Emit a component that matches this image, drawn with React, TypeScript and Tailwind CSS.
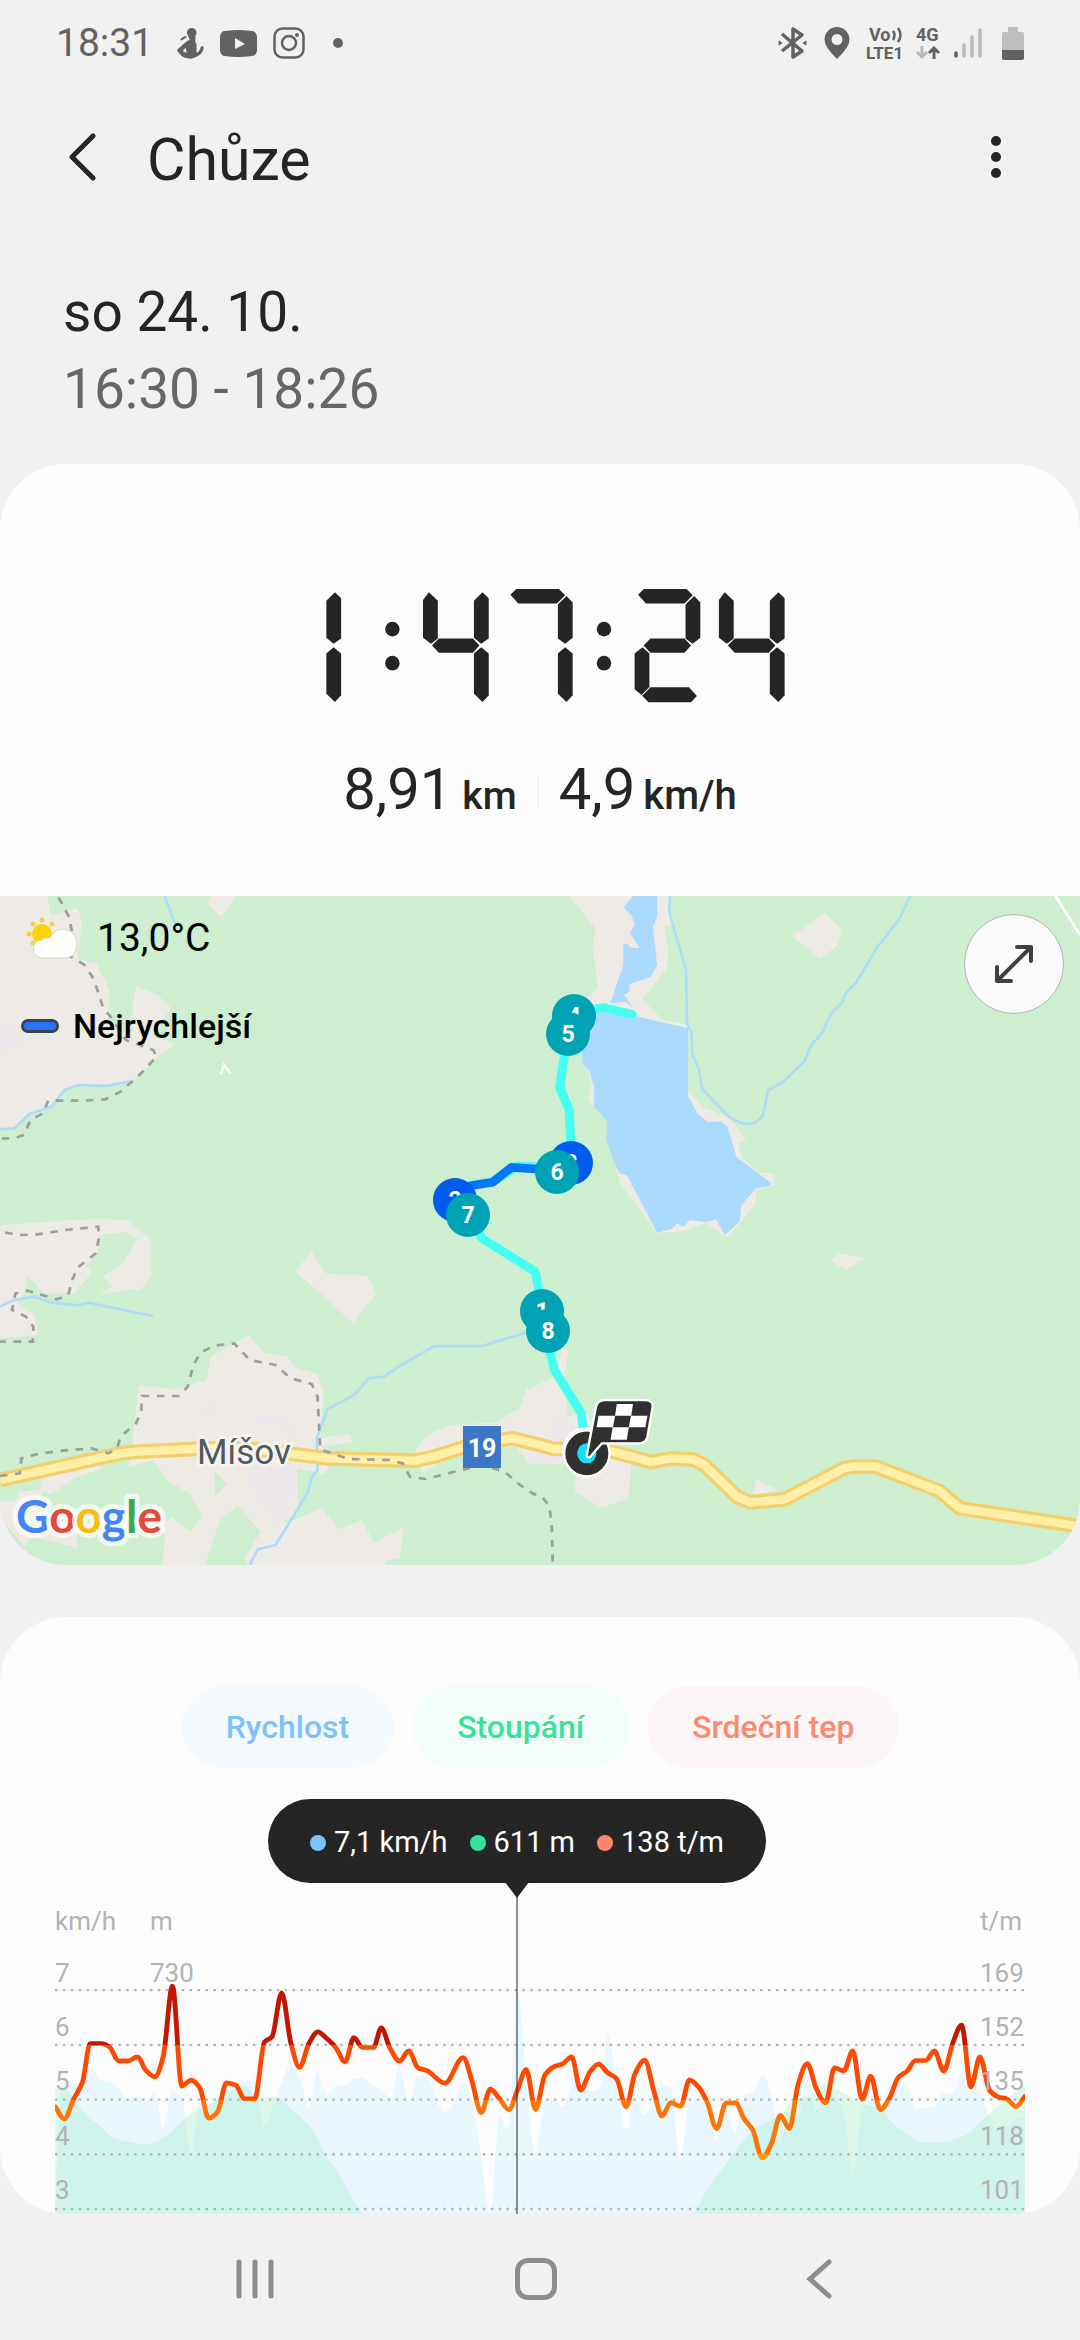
type Point = [number, number];

const SEGMENTS: Record<string, string> = {
  a: '10,104 27,87 151,87 169,106 145,130 33,130',
  b: '148,133 173,108 191,127 191,233 169,251 148,235',
  B: '148,122 173,97 191,115 191,235 169,251 148,233',
  c: '148,280 169,261 191,280 191,405 173,425 148,400',
  d: '22,406 46,381 158,381 181,407 164,426 40,426',
  e: '0,280 23,261 43,280 43,380 20,404 0,387',
  f: '0,120 17,97 43,122 43,235 23,251 0,233',
  g: '26,256 46,235 145,235 164,256 145,278 46,278',
};

const DIGITS = [
  { x: -14, on: 'Bc' },
  { x: 415, on: 'fBgc' },
  { x: 659, on: 'abc' },
  { x: 1030, on: 'abged' },
  { x: 1275, on: 'fBgc' },
];

const PINS = [
  { n: 1, x: 542, y: 415, fast: false },
  { n: 2, x: 455, y: 304, fast: true },
  { n: 3, x: 571, y: 267, fast: true },
  { n: 4, x: 574, y: 120, fast: false },
  { n: 5, x: 568, y: 138, fast: false },
  { n: 6, x: 557, y: 276, fast: false },
  { n: 7, x: 468, y: 319, fast: false },
  { n: 8, x: 548, y: 435, fast: false },
];

const HEART_RATE: Point[] = [
  [161, 680], [187, 716], [215, 655], [240, 605], [262, 490], [295, 490], [318, 500], [345, 542], [372, 542], [399, 530],
  [425, 572], [450, 590], [474, 530], [501, 318], [528, 618], [555, 600], [580, 622], [606, 714], [632, 695], [658, 608],
  [685, 615], [710, 656], [740, 656], [768, 486], [790, 470], [818, 338], [845, 490], [870, 562], [897, 490], [923, 455],
  [950, 476], [975, 502], [1002, 545], [1028, 472], [1052, 502], [1085, 502], [1107, 443], [1133, 505], [1160, 543],
  [1187, 512], [1214, 563], [1240, 571], [1292, 609], [1345, 532], [1370, 600], [1397, 697], [1424, 627], [1450, 655],
  [1478, 688], [1503, 628], [1528, 568], [1555, 688], [1582, 585], [1608, 560], [1634, 551], [1660, 530], [1686, 630],
  [1713, 575], [1738, 552], [1765, 578], [1790, 595], [1818, 680], [1844, 580], [1872, 540], [1898, 630], [1922, 708],
  [1948, 667], [1976, 678], [2002, 599], [2028, 620], [2053, 665], [2081, 745], [2108, 668], [2136, 668], [2160, 715],
  [2186, 750], [2213, 833], [2240, 790], [2266, 705], [2292, 745], [2318, 610], [2344, 550], [2370, 625], [2397, 668],
  [2423, 563], [2450, 572], [2476, 512], [2503, 658], [2528, 588], [2556, 688], [2582, 655], [2608, 592], [2634, 572],
  [2658, 541], [2688, 541], [2713, 512], [2740, 573], [2766, 490], [2792, 435], [2819, 620], [2845, 530], [2873, 630],
  [2898, 650], [2923, 656], [2950, 679], [2976, 648],
];

const SPEED: Point[] = [
  [161, 1001], [180, 600], [210, 612], [240, 600], [265, 560], [290, 598], [318, 602], [345, 625], [370, 660], [397, 643],
  [424, 668], [450, 635], [475, 745], [500, 630], [528, 650], [555, 822], [580, 665], [606, 670], [632, 658], [658, 640],
  [685, 620], [710, 605], [740, 603], [766, 735], [800, 660], [820, 600], [845, 552], [870, 590], [897, 683], [922, 573],
  [950, 645], [975, 618], [1002, 616], [1028, 594], [1052, 595], [1080, 615], [1107, 630], [1135, 655], [1160, 550],
  [1187, 668], [1214, 590], [1240, 590], [1265, 660], [1292, 695], [1318, 670], [1345, 608], [1370, 660], [1397, 830],
  [1424, 1001], [1450, 710], [1476, 748], [1503, 330], [1528, 600], [1555, 820], [1582, 660], [1608, 650], [1634, 680],
  [1660, 615], [1686, 590], [1700, 632], [1730, 632], [1748, 600], [1765, 463], [1790, 610], [1818, 750], [1844, 655],
  [1872, 705], [1895, 660], [1920, 612], [1948, 625], [1976, 845], [2002, 670], [2028, 658], [2055, 690], [2081, 775],
  [2108, 680], [2134, 760], [2160, 645], [2186, 635], [2213, 586], [2240, 640], [2266, 790], [2290, 690], [2318, 720],
  [2344, 565], [2370, 698], [2397, 640], [2423, 650], [2450, 700], [2476, 892], [2503, 690], [2528, 660], [2556, 675],
  [2582, 620], [2608, 600], [2634, 620], [2660, 685], [2700, 680], [2715, 680], [2735, 640], [2766, 638], [2792, 580],
  [2819, 630], [2840, 620], [2865, 690], [2890, 745], [2920, 740], [2950, 718], [2976, 708],
];

const ELEVATION: Point[] = [
  [161, 625], [190, 628], [230, 680], [265, 718], [290, 735], [325, 770], [350, 780], [380, 785], [410, 792], [440, 788],
  [480, 770], [500, 752], [530, 722], [560, 695], [600, 678], [640, 655], [680, 625], [710, 615], [745, 650], [800, 650],
  [850, 690], [895, 735], [920, 770], [950, 830], [975, 865], [1025, 955], [1057, 1001], [2006, 1001], [2058, 920],
  [2108, 850], [2133, 815], [2193, 745], [2258, 708], [2323, 652], [2358, 650], [2393, 610], [2438, 632], [2498, 665],
  [2558, 690], [2598, 735], [2638, 765], [2678, 785], [2728, 786], [2792, 770], [2868, 705], [2938, 645], [2976, 618],
];

const GRID_ROWS = [330, 494, 658, 822, 986];

const AXIS = [
  { y: 214, speed: '7', rate: '169' },
  { y: 268, speed: '6', rate: '152' },
  { y: 322, speed: '5', rate: '135' },
  { y: 377, speed: '4', rate: '118' },
  { y: 431, speed: '3', rate: '101' },
];

const ROAD =
  'M0 1770L350 1690 400 1685 600 1675H720L950 1705 1205 1712 1260 1700 1380 1660 1450 1650 1490 1645 1568 1665 1608 1677 1700 1675 1780 1685 1890 1716 1948 1705 2015 1709 2045 1725 2140 1820 2178 1837 2278 1828 2450 1735 2475 1730H2543L2728 1803 2788 1855 3110 1905 3136 1910';

// Monotone cubic through the samples, so that peaks stay on the samples
function smooth(points: Point[]) {
  const slope = points.slice(1).map(([x, y], i) => (y - points[i][1]) / (x - points[i][0]));
  const tangent = points.map((_, i) => {
    const before = slope[i - 1];
    const after = slope[i];
    if (before === undefined || after === undefined) return before ?? after;
    return before * after <= 0 ? 0 : (2 * before * after) / (before + after);
  });
  return points.reduce((d, [x, y], i) => {
    if (i === 0) return `M${x} ${y}`;
    const [px, py] = points[i - 1];
    const h = (x - px) / 3;
    return `${d}C${px + h} ${py + h * tangent[i - 1]} ${x - h} ${y - h * tangent[i]} ${x} ${y}`;
  }, '');
}

const area = (points: Point[]) => `${smooth(points)}V1001H${points[0][0]}Z`;

const StatusBar = () => (
  <div className="flex h-[82px] items-center justify-between px-14 pt-1 text-[#626262]">
    <div className="flex items-center">
      <span className="text-[39px] leading-none">18:31</span>
      <svg className="ml-6 h-[31px] w-[27px]" viewBox="0 0 77 90" fill="currentColor">
        <circle cx="42" cy="14" r="14" />
        <path d="M33 24h20l-1 16q6 6 4 14v18q10-4 12-16 2-5 7-2 3 2 1 8-6 22-36 27-24-1-31-12L1 68q-3-3 1-7l24-21 10-6z" />
        <path d="M8 34q8-11 20-11-4 9-18 13z" />
        <path d="M16 66l8-9 4 14q-8 1-12-5z" fill="#f1f1f1" />
      </svg>
      <svg className="ml-4 h-[27px] w-[37px]" viewBox="0 0 37 27">
        <path d="M5 1Q18-1 32 1q4 0 5 5 1 8 0 15-1 5-5 5-14 2-27 0-4 0-5-5-1-7 0-15 1-5 5-5z" fill="currentColor" />
        <path d="M15 8l10 6-10 5z" fill="#f1f1f1" />
      </svg>
      <svg className="ml-4 h-8 w-8" viewBox="0 0 32 32" fill="none" stroke="currentColor" strokeWidth="2.5">
        <rect x="1.5" y="1.5" width="29" height="29" rx="8" />
        <circle cx="16" cy="16" r="7" />
        <circle cx="24" cy="8" r="2" fill="currentColor" stroke="none" />
      </svg>
      <span className="ml-7 h-2.5 w-2.5 rounded-full bg-current" />
    </div>
    <div className="flex items-center">
      <svg className="h-[34px] w-[30px]" viewBox="0 0 30 34" fill="none" stroke="currentColor" strokeWidth="3.5" strokeLinejoin="round">
        <path d="M4 8l20 17-9 6V3l9 6L4 25" />
        <path d="M1 15l3 2-3 2zM28 15l-3 2 3 2z" fill="currentColor" strokeWidth="1" />
      </svg>
      <svg className="ml-4 h-8 w-[26px]" viewBox="0 0 26 32">
        <path d="M13 0a12.500 12.500 0 0 1 12.500 12.500Q25.500 20 13 32 .5 20 .5 12.500A12.500 12.500 0 0 1 13 0zm0 7a5.500 5.500 0 1 0 0 11 5.500 5.500 0 0 0 0-11z" fill="currentColor" />
      </svg>
      <svg className="ml-4 h-11 w-[40px]" viewBox="0 0 40 44" fill="currentColor">
        <text x="3" y="20" className="text-[18px] font-bold">Vo</text>
        <path d="M27 10q3 4 0 9M32 7q5 7 0 14" fill="none" stroke="currentColor" strokeWidth="2.500" />
        <text x="0" y="38" className="text-[17px] font-bold">LTE1</text>
      </svg>
      <svg className="ml-2.5 h-11 w-6" viewBox="0 0 24 44" fill="currentColor">
        <text x="0" y="20" className="text-[18px] font-bold">4G</text>
        <path d="M6 25v11M1 31l5 5 5-5" fill="none" stroke="#b9b9b9" strokeWidth="3" />
        <path d="M18 38V27M13 32l5-5 5 5" fill="none" stroke="currentColor" strokeWidth="3" />
      </svg>
      <svg className="ml-3.5 h-[30px] w-7" viewBox="0 0 28 30" fill="none" strokeWidth="3.500" strokeLinecap="round">
        <path d="M2 25v3" stroke="currentColor" />
        <path d="M10 17v11M18 9v19M26 2v26" stroke="#b9b9b9" />
      </svg>
      <svg className="ml-5 h-[33px] w-[22px]" viewBox="0 0 22 33">
        <path d="M6 0h10v5h4q2 0 2 2v24q0 2-2 2H2q-2 0-2-2V7q0-2 2-2h4z" fill="#bfbfbf" />
        <path d="M0 23h22v8q0 2-2 2H2q-2 0-2-2z" fill="currentColor" />
      </svg>
    </div>
  </div>
);

const Header = () => (
  <header>
    <div className="flex h-[150px] items-center px-14">
      <button type="button" aria-label="Zpět" className="flex h-16 w-[91px] items-center pl-3">
        <svg className="h-12 w-7" viewBox="0 0 28 48" fill="none" stroke="#252525" strokeWidth="5" strokeLinecap="round" strokeLinejoin="round">
          <path d="M25 3L4 24l21 21" />
        </svg>
      </button>
      <h1 className="pt-1 text-[59px] leading-none">Chůze</h1>
      <button type="button" aria-label="Další možnosti" className="ml-auto flex h-16 w-16 items-center justify-center">
        <svg className="ml-2 h-[42px] w-2.5" viewBox="0 0 10 42" fill="#252525">
          <circle cx="5" cy="5" r="5" />
          <circle cx="5" cy="21" r="5" />
          <circle cx="5" cy="37" r="5" />
        </svg>
      </button>
    </div>
    <div className="px-[63px] pb-9 pt-[42px] text-[55px] leading-[77px]">
      <p>so 24. 10.</p>
      <p className="text-[#666666]">16:30 - 18:26</p>
    </div>
  </header>
);

const Duration = () => (
  <svg role="img" aria-label="1:47:24" className="mx-auto h-[115px] w-[492px]" viewBox="40 84 1430 344" preserveAspectRatio="none" fill="#252525">
    {DIGITS.map(({ x, on }) => (
      <g key={x} transform={`translate(${x} 0)`}>
        {on.split('').map((s) => (
          <polygon key={s} points={SEGMENTS[s]} />
        ))}
      </g>
    ))}
    {[326, 941].map((x) => (
      <g key={x}>
        <ellipse cx={x} cy="207" rx="21" ry="22" />
        <ellipse cx={x} cy="309" rx="21" ry="22" />
      </g>
    ))}
  </svg>
);

const Terrain = () => (
  <svg width="1080" height="669" viewBox="0 18 3136 2007" preserveAspectRatio="none" fill="none">
    <rect y="18" width="3136" height="2007" fill="#cdeecf" />
    <g fill="#eeebe6">
      <path d="M0 18H138L148 75 225 55 238 95 225 208 278 218 318 300V385L350 425H385V350L395 287 455 312 497 355 440 440 515 460 465 495 382 575 310 590 225 583 190 600 150 650 85 675 42 715 0 718Z" />
      <path d="M610 18H685L643 80 602 42Z" />
      <path d="M0 1005L300 985 370 992 440 1050V1160L403 1205 385 1195 285 1215 328 1190 298 1160 360 1115 398 1047 370 1025 288 1035 285 1090 250 1125 267 1148 215 1210H125L82 1158 70 1210 45 1235 0 1250Z" />
      <path d="M0 1250L40 1230 100 1275 112 1335 0 1345Z" />
      <path d="M905 1085L945 1150 1068 1158 1092 1212 1025 1298 857 1143Z" />
      <path d="M403 1485L510 1498 600 1470 612 1400 722 1335 765 1388 832 1398 860 1433 922 1452 940 1510 930 1645 1015 1632 1025 1655 935 1670 955 1730 940 1753 862 1735 865 1870 810 1900 840 1895 935 1855 985 1918 1050 1890 1085 1957 1172 1915 1160 2005 1120 2012V2025H720L710 2005 757 1925 690 1848 640 1885 595 2025H470L480 1955 470 1900 500 1883 553 1925 587 1875 550 1810 490 1775 445 1710 372 1733 385 1660Z" />
      <path d="M118 1765L295 1725 290 1738 215 1765 180 1790 145 1815 130 1800 100 1850 225 1890V1973L95 1940 68 1968 0 1880V1832H45L55 1805 118 1798Z" />
      <path d="M1205 1685L1240 1635 1310 1605 1440 1597 1456 1588 1508 1555 1528 1500 1613 1460 1635 1360 1650 1390 1640 1450 1648 1580 1700 1565 1735 1620 1830 1690 1833 1725 1826 1825 1748 1853 1670 1808 1672 1722H1535L1500 1670 1345 1680 1225 1748Z" />
      <path d="M2433 1090L2513 1105 2458 1138 2413 1115Z" />
      <path d="M2196 1767L2258 1800 2186 1815Z" />
      <path d="M2395 68L2443 120 2433 165 2381 208 2301 138Z" />
      <path d="M1653 18L1728 115 1720 180 1738 290 1705 325 1740 360 1840 375 1998 415 1990 402 1925 390 1865 328 1933 240 1942 195 1928 108H1947L1940 18Z" />
      <path d="M1690 480L1718 590 1708 630 1770 700 1785 820 1800 880 1908 1030 1985 1024 2050 1000 2108 1042 2150 1000 2195 940V900L2247 887 2245 850 2205 848 2155 805 2142 765 2166 748 2120 685 2040 650 1998 600Z" />
    </g>
    <path d="M622 1742L658 1782 625 1817Z" fill="#cdeecf" />
    <g fill="#ede8ec">
      <path d="M0 400L75 430V470L0 485Z" />
      <path d="M580 1565L630 1533 628 1565 590 1575Z" />
      <path d="M733 1600L770 1570 820 1580 870 1620 865 1645 800 1605Z" />
      <path d="M720 1750L855 1720 860 1775 820 1900H795L745 1810Z" />
      <path d="M1610 1560L1648 1590 1660 1722H1535L1530 1680 1620 1640Z" />
    </g>
    <g fill="#abdaff">
      <path d="M1838 18L1810 52 1835 78 1843 105 1828 128 1858 173H1832L1820 160 1810 165V225L1772 340 1818 335 1842 358 1812 315 1828 303V283L1890 260 1908 225 1896 110 1908 80V18Z" />
      <path d="M1733 365L1843 378 1998 415V618L2025 670 2055 695H2095L2113 710 2138 800 2240 880 2238 887 2195 895 2153 945 2148 995 2105 1035 2078 988 2050 997 2003 990 1985 1010 1965 1000 1955 1015 1908 1028 1820 855 1798 850 1785 820 1760 750 1764 695 1725 650V590L1710 540 1692 520 1690 490Z" />
    </g>
    <g stroke="#aedcf8" strokeWidth="8" strokeLinejoin="round">
      <path d="M478 18L510 105" />
      <path d="M0 718L42 715 85 672 150 650 187 600 228 585 310 588 382 573" />
      <path d="M0 1250L40 1230 98 1220 145 1237 225 1246 255 1238 445 1278" />
      <path d="M1530 1327L1400 1368H1262L1165 1425 1115 1460 1070 1465 1028 1515 950 1558 920 1645 922 1740 905 1762 893 1810 800 1965 748 1978 725 2025" />
      <path d="M1946 18L1943 65 1992 240 1995 400 2008 430 2010 490 2030 540 2038 595 2118 682 2160 702 2190 700 2215 678 2230 602 2275 575 2337 513 2353 470 2390 425 2410 375 2447 335 2455 310 2488 275 2545 175 2610 90 2643 18" />
    </g>
    <path d="M3065 18L3136 135M641 553L650 525 669 549" stroke="#fff" strokeWidth="8" />
    <g strokeLinejoin="round">
      <path d={ROAD} stroke="#f4d06c" strokeWidth="44" />
      <path d={ROAD} stroke="#ffefa9" strokeWidth="25" />
    </g>
    <g stroke="#9e9e9e" strokeWidth="8" strokeDasharray="22 22">
      <path d="M170 22L200 80 210 130 198 195 245 225 268 260 283 300 300 355 325 385 365 450 445 480 455 500 400 560 350 605 305 628 240 632H140L125 670 88 690 70 735 45 744 0 746" />
      <path d="M15 1028L60 1035 110 1033 190 1020 285 1010 288 1040 278 1090 225 1133 210 1170 198 1215 165 1228 80 1202 45 1210 35 1260 75 1280 97 1310 95 1355H0" />
      <path d="M0 1758L58 1750 62 1705 110 1692 180 1682 265 1675 315 1690 340 1675 350 1640 395 1600 410 1565 412 1518H520L545 1490 560 1430 580 1390 620 1367 680 1360 725 1410 800 1425 845 1465 905 1482 922 1520 930 1680 960 1688 1010 1707 1130 1710 1170 1720 1190 1760 1235 1767 1400 1725 1465 1745 1510 1785 1550 1812 1575 1820 1595 1850 1602 1900 1605 2025" />
    </g>
    <g strokeWidth="26" strokeLinecap="round" strokeLinejoin="round">
      <path d="M1836 373L1756 353 1735 355 1665 400 1640 490 1625 592 1653 660 1657 755 1660 800 1600 832 1505 828 1430 875 1365 887 1360 975 1400 1045 1554 1145 1575 1250 1600 1400 1610 1440 1688 1570 1702 1690" stroke="#46fff3" />
      <path d="M1600 840L1485 832 1430 877 1365 887 1320 915" stroke="#0078fb" />
    </g>
  </svg>
);

const FinishFlag = () => (
  <svg width="1080" height="669" viewBox="0 18 3136 2007" preserveAspectRatio="none" stroke="#fff" strokeWidth="7" strokeLinejoin="round">
    <ellipse cx="1702" cy="1683" rx="66" ry="68" fill="#8a8a8a" />
    <ellipse cx="1704" cy="1690" rx="66" ry="69" fill="#303030" />
    <ellipse cx="1704" cy="1690" rx="28" ry="30" fill="#16e0f8" stroke="none" />
    <path d="M1755 1530H1875Q1898 1532 1895 1552L1880 1640Q1876 1660 1855 1660H1748L1714 1700Q1704 1706 1704 1695L1730 1552Q1735 1530 1755 1530Z" fill="#303030" />
    <g fill="#fff" stroke="none">
      <path d="M1791 1542H1838L1833 1577H1786Z" />
      <path d="M1738 1577H1786L1780 1612H1732Z" />
      <path d="M1832 1577H1880L1874 1612H1826Z" />
      <path d="M1779 1612H1826L1820 1649H1773Z" />
    </g>
  </svg>
);

const RouteMap = () => (
  <div className="relative">
    <svg className="block w-full font-[Roboto,sans-serif]" viewBox="0 0 1080 669">
      <Terrain />
      <text x="197" y="568" className="text-[35px]" fill="#525860" stroke="#f6f3ef" strokeWidth="6" strokeLinejoin="round" paintOrder="stroke">Míšov</text>
      <rect x="463" y="530" width="38" height="42" fill="#3a77c6" />
      <text x="482" y="561" textAnchor="middle" className="text-[25px] font-bold" fill="#fff">19</text>
      {PINS.map(({ n, x, y, fast }) => (
        <g key={n}>
          <circle cx={x} cy={y} r="22" fill={fast ? '#005cee' : '#00a3b4'} />
          <text x={x} y={y + 8} textAnchor="middle" className="text-[23px] font-bold" fill="#fff">{n}</text>
        </g>
      ))}
      <FinishFlag />
      <text x="16" y="637" className="font-[Lato,sans-serif] text-[46px] font-bold" stroke="#ffffffb0" strokeWidth="10" strokeLinejoin="round" paintOrder="stroke">
        <tspan fill="#4285f4">G</tspan>
        <tspan fill="#e34a3b">o</tspan>
        <tspan fill="#f6bc14">o</tspan>
        <tspan fill="#4285f4">g</tspan>
        <tspan fill="#3aa757">l</tspan>
        <tspan fill="#e34a3b">e</tspan>
      </text>
    </svg>
    <div className="absolute left-[21px] top-4 text-black">
      <div className="flex items-center">
        <svg className="ml-1 h-[44px] w-[54px]" viewBox="0 0 54 44">
          <g fill="#f1d04f">
            <circle cx="4" cy="18" r="2.500" />
            <circle cx="8" cy="8" r="2.500" />
            <circle cx="17" cy="4" r="2.500" />
            <circle cx="27" cy="8" r="2.500" />
            <circle cx="8" cy="27" r="2.500" />
          </g>
          <circle cx="17" cy="18" r="10" fill="#fbd305" />
          <path d="M17 42a8 8 0 0 1 0-18 9 9 0 0 1 8-2 14 14 0 0 1 27 5q0 11-9 15z" fill="#fdfdfc" stroke="#d8d5cf" strokeWidth="1" />
        </svg>
        <span className="ml-[18px] text-[39px] leading-[52px]">13,0°C</span>
      </div>
      <div className="mt-9 flex items-center">
        <span className="h-3.5 w-[38px] rounded-full border-3 border-[#3c4452] bg-[#2a72fa]" />
        <span className="ml-3.5 text-[34px] font-medium leading-[52px]">Nejrychlejší</span>
      </div>
    </div>
    <button type="button" aria-label="Zvětšit mapu" className="absolute right-4 top-[18px] flex h-[100px] w-[100px] items-center justify-center rounded-full border border-[#b3b3b3] bg-[#fafafa]">
      <svg className="h-10 w-10" viewBox="0 0 40 40" fill="none" stroke="#404040" strokeWidth="4" strokeLinecap="round" strokeLinejoin="round">
        <path d="M3 37L37 3M23 3h14v14M3 23v14h14" />
      </svg>
    </button>
  </div>
);

const Summary = () => (
  <section className="overflow-hidden rounded-[66px] bg-[#fcfcfc]">
    <div className="pb-16 pt-[124px]">
      <Duration />
      <div className="mt-[49px] flex h-20 items-center justify-center text-[58px] leading-[80px]">
        <p>
          8,91<span className="ml-2.5 text-[39px] font-medium">km</span>
        </p>
        <span className="mx-5 h-[34px] w-0.5 bg-[#f4f4f4]" />
        <p>
          4,9<span className="ml-2 text-[40px] font-medium">km/h</span>
        </p>
      </div>
    </div>
    <RouteMap />
  </section>
);

const Chart = () => (
  <div className="relative mx-[55px]">
    <svg className="block w-full" viewBox="0 0 970 446">
      <defs>
        <linearGradient id="zones" gradientUnits="userSpaceOnUse" x1="0" y1="0" x2="0" y2="1000">
          <stop offset=".495" stopColor="#c31603" />
          <stop offset=".495" stopColor="#fd4a02" />
          <stop offset=".658" stopColor="#fd4a02" />
          <stop offset=".658" stopColor="#fd7509" />
          <stop offset=".822" stopColor="#fd7509" />
          <stop offset=".822" stopColor="#ff9b05" />
        </linearGradient>
      </defs>
      <svg y="112" width="970" height="334" viewBox="160 0 2816 1001" preserveAspectRatio="none" fill="none">
        <path d={area(SPEED)} fill="#e9f6fe" />
        <path d={area(ELEVATION)} fill="#98efc4" fillOpacity=".32" />
        <path d={GRID_ROWS.map((y) => `M160 ${y}H2976`).join('')} stroke="#b0b4b4" strokeWidth="7" strokeDasharray="7 16" />
        <path d={smooth(HEART_RATE)} stroke="url(#zones)" strokeWidth="14" strokeLinecap="round" strokeLinejoin="round" />
      </svg>
      <path d="M462 115V446" stroke="#252525" />
      <g className="text-[26px]" fill="#b3b3b3">
        <text x="0" y="162">km/h</text>
        <text x="95" y="162">m</text>
        <text x="925" y="162">t/m</text>
        <text x="95" y="214">730</text>
        {AXIS.map(({ y, speed, rate }) => (
          <g key={y}>
            <text x="0" y={y}>{speed}</text>
            <text x="925" y={y}>{rate}</text>
          </g>
        ))}
      </g>
    </svg>
    <div className="absolute left-[213px] top-[31px] flex h-[84px] w-[498px] items-center justify-center whitespace-nowrap rounded-full bg-[#252525] pt-1 text-[29px] text-white">
      <span className="mr-2 h-4 w-4 rounded-full bg-[#7ac2ff]" />
      7,1 km/h
      <span className="ml-[22px] mr-2 h-4 w-4 rounded-full bg-[#33e39c]" />
      611 m
      <span className="ml-[22px] mr-2 h-4 w-4 rounded-full bg-[#ff866c]" />
      138 t/m
      <svg className="absolute left-[237px] top-[83px] h-4 w-6" viewBox="0 0 24 16" fill="#252525">
        <path d="M0 0h24L12 16z" />
      </svg>
    </div>
  </div>
);

const Performance = () => (
  <section className="mt-13 overflow-hidden rounded-[66px] bg-[#fcfcfc] pt-[69px]">
    <div className="flex justify-center gap-[18px] text-[32px] font-medium">
      <button type="button" className="h-[82px] rounded-full bg-[#f4f9fe] px-[45px] text-[#7dc2ff]">Rychlost</button>
      <button type="button" className="h-[82px] rounded-full bg-[#f2fdf9] px-[45px] text-[#39e29b]">Stoupání</button>
      <button type="button" className="h-[82px] rounded-full bg-[#fcf5f5] px-[45px] text-[#fb8a72]">Srdeční tep</button>
    </div>
    <Chart />
  </section>
);

const NavigationBar = () => (
  <nav className="grid h-[126px] grid-cols-[1fr_auto_1fr] items-center px-[200px] pt-1">
    <button type="button" aria-label="Poslední aplikace" className="flex h-20 items-center pl-9">
      <svg className="h-10 w-10" viewBox="0 0 40 40" stroke="#8d8d8d" strokeWidth="5" strokeLinecap="round">
        <path d="M3 3v34M19 3v34M35 3v34" />
      </svg>
    </button>
    <button type="button" aria-label="Domů" className="flex h-20 items-center justify-center pr-2">
      <span className="h-[42px] w-[42px] rounded-[13px] border-5 border-[#8d8d8d]" />
    </button>
    <button type="button" aria-label="Zpět" className="flex h-20 items-center justify-end pr-12">
      <svg className="h-10 w-7" viewBox="0 0 28 40" fill="none" stroke="#8d8d8d" strokeWidth="5" strokeLinecap="round">
        <path d="M25 3L6 20l19 17" />
      </svg>
    </button>
  </nav>
);

const App = () => {
  return (
    <main className="min-h-screen overflow-hidden bg-[#f1f1f1] font-[Roboto,sans-serif] text-[#252525]">
      <StatusBar />
      <Header />
      <Summary />
      <Performance />
      <NavigationBar />
    </main>
  );
};

export default App;
